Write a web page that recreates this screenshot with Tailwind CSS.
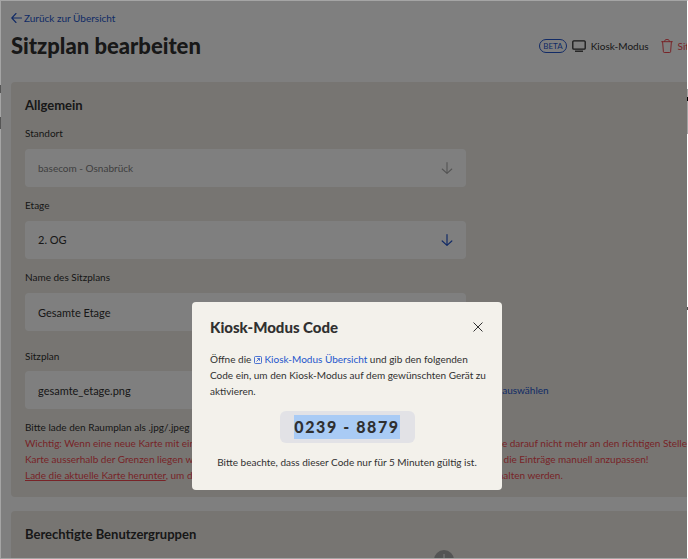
<!DOCTYPE html>
<html lang="de">

<head>
    <meta charset="UTF-8">
    <meta name="viewport" content="width=device-width, initial-scale=1.0">
    <title>Sitzplan bearbeiten</title>
    <script src="https://cdn.jsdelivr.net/npm/@tailwindcss/browser@4"></script>
</head>

<body class="h-screen overflow-hidden bg-white font-[Lato,sans-serif] text-[10px] leading-4 text-[#303030]">
    <div class="h-full overflow-hidden pl-[11px] pt-[10px]">
        <header>
            <a href="#" class="flex w-fit items-center gap-0.5 text-[#2456cc]">
                <svg class="h-3 w-[11px]" viewBox="0 0 11 12" fill="none" stroke="currentColor" stroke-width="1.1" stroke-linecap="round" stroke-linejoin="round">
                    <path d="M10.5 6H.8M5 1.5.8 6 5 10.5" />
                </svg>
                Zurück zur Übersicht
            </a>
            <div class="mt-1 flex items-center justify-between">
                <h1 class="text-[22px] leading-8 font-black whitespace-nowrap">Sitzplan bearbeiten</h1>
                <div class="-mr-6 flex shrink-0 items-center whitespace-nowrap">
                    <span class="mr-[5px] rounded-full border border-[#2456cc] px-[3px] text-[8px] leading-3 text-[#2456cc]">BETA</span>
                    <button class="flex items-center gap-[5px]">
                        <svg class="h-3 w-[14px]" viewBox="0 0 14 12" fill="none" stroke="currentColor" stroke-width="1.3" stroke-linejoin="round">
                            <rect x=".8" y=".8" width="12.4" height="8.4" rx="1" />
                            <path d="M3 11.2h8" />
                        </svg>
                        Kiosk-Modus
                    </button>
                    <button class="ml-3 flex items-center gap-[5px] text-[#f04850]">
                        <svg class="h-[14px] w-3" viewBox="0 0 12 14" fill="none" stroke="currentColor" stroke-linejoin="round" stroke-linecap="round">
                            <path d="M.7 2.7h10.6M1.6 2.7l.8 10.1q.1.7.8.7h5.6q.7 0 .8-.7l.8-10.1M3.6 2.5l.5-1.4Q4.3.6 4.9.6h2.2q.6 0 .8.5l.5 1.4" />
                        </svg>
                        Sitzplan
                    </button>
                </div>
            </div>
        </header>

        <main class="mt-5 flex flex-col gap-[14px]">
            <section class="rounded-l bg-[#eeebe5] px-[14px] pt-[14px] pb-[14px]">
                <h2 class="text-[13px] leading-[18px] font-bold">Allgemein</h2>
                <div class="mt-[11px] grid gap-[10px]">
                    <div>
                        <label for="location" class="block">Standort</label>
                        <div class="relative mt-2 w-[441px]">
                            <select id="location" disabled class="h-[38px] w-full appearance-none rounded bg-white px-[13px] text-[10px] text-[#808080] opacity-100">
                                <option>basecom - Osnabrück</option>
                            </select>
                            <svg class="pointer-events-none absolute top-[13px] right-[13px] h-3 w-3 text-[#a8a8a8]" viewBox="0 0 12 12" fill="none" stroke="currentColor" stroke-width="1.1" stroke-linecap="round" stroke-linejoin="round">
                                <path d="M6 .6v10.8M1.2 7 6 11.4 10.8 7" />
                            </svg>
                        </div>
                    </div>
                    <div>
                        <label for="floor" class="block">Etage</label>
                        <div class="relative mt-2 w-[441px]">
                            <select id="floor" class="h-[38px] w-full appearance-none rounded bg-white px-[13px] text-[11px]">
                                <option>2. OG</option>
                            </select>
                            <svg class="pointer-events-none absolute top-[13px] right-[13px] h-3 w-3 text-[#2456cc]" viewBox="0 0 12 12" fill="none" stroke="currentColor" stroke-width="1.2" stroke-linecap="round" stroke-linejoin="round">
                                <path d="M6 .6v10.8M1.2 7 6 11.4 10.8 7" />
                            </svg>
                        </div>
                    </div>
                    <div>
                        <label for="plan-name" class="block">Name des Sitzplans</label>
                        <input id="plan-name" type="text" value="Gesamte Etage" class="mt-2 block h-[38px] w-[441px] rounded bg-white px-[13px] text-[11px]">
                    </div>
                </div>
                <div class="mt-[17px]">
                    <label for="plan-file" class="block">Sitzplan</label>
                    <div class="mt-[7px] flex items-center">
                        <input id="plan-file" type="text" value="gesamte_etage.png" readonly class="block h-[38px] w-[441px] rounded bg-white px-[13px] text-[11px]">
                        <button class="ml-[10px] whitespace-nowrap text-[#2456cc]">Datei auswählen</button>
                    </div>
                </div>
                <div class="mt-[10px] whitespace-nowrap">
                    <p>Bitte lade den Raumplan als .jpg/.jpeg oder .png hoch.</p>
                    <div class="text-[#f04850]">
                        <p>Wichtig: Wenn eine neue Karte mit einem anderen Seitenverhältnis hochgeladen wird, so liegen diese Einträge darauf nicht mehr an den richtigen Stellen.</p>
                        <p>Karte ausserhalb der Grenzen liegen würden, werden nicht angezeigt. Bitte denke daran und sei so vorsichtig, die Einträge manuell anzupassen!</p>
                        <p><a href="#" class="underline">Lade die aktuelle Karte herunter</a>, um die Größe und das alte Format zu prüfen. So können alle Einträge beibehalten werden.</p>
                    </div>
                </div>
            </section>

            <section class="rounded-l bg-[#eeebe5] px-[14px] pt-[14px] pb-8">
                <h2 class="text-[13px] leading-[18px] font-bold">Berechtigte Benutzergruppen</h2>
                <div class="mt-[7px] ml-[409px] flex">
                    <button aria-label="Gruppe hinzufügen" class="flex h-5 w-5 items-center justify-center rounded-full bg-[#a8a8a8] text-white">
                        <svg class="h-3 w-3" viewBox="0 0 12 12" fill="none" stroke="currentColor">
                            <path d="M6 0v12M0 6h12" />
                        </svg>
                    </button>
                </div>
            </section>
        </main>
    </div>

    <div class="fixed inset-0 border border-r-white border-t-[#a5a5a5] border-b-[#a5a5a5] border-l-[#a5a5a5] bg-black/50 bg-clip-padding"></div>

    <!-- bits of the window behind, left and right edge -->
    <div class="fixed top-[85px] left-0 h-2 w-px bg-[#555]"></div>
    <div class="fixed top-[117px] left-0 h-3 w-px bg-[#555]"></div>
    <div class="fixed top-[89px] right-0 h-[45px] w-px bg-[#a5a5a5]"></div>
    <div class="fixed top-[97px] right-0 h-1 w-px bg-black"></div>
    <div class="fixed top-[307px] right-0 h-[3px] w-px bg-[#555]"></div>

    <dialog open aria-labelledby="kiosk-title" class="fixed top-[302px] left-[192px] m-0 block w-[310px] rounded bg-[#f3f1eb] px-[18px] pt-[14px] pb-5 text-[#303030]">
        <div class="flex items-center justify-between">
            <h2 id="kiosk-title" class="text-[15px] leading-[22px] font-black">Kiosk-Modus Code</h2>
            <button aria-label="Schließen">
                <svg class="h-3 w-3" viewBox="0 0 12 12" fill="none" stroke="currentColor" stroke-linecap="round">
                    <path d="m1.8 1.8 8.4 8.4M10.2 1.8l-8.4 8.4" />
                </svg>
            </button>
        </div>
        <p class="mt-[13px] whitespace-nowrap">
            Öffne die
            <a href="#" class="text-[#2456cc]"><svg class="inline h-2 w-2 align-[-1px]" viewBox="0 0 8 8" fill="none" stroke="currentColor" stroke-width=".8">
                    <rect x=".5" y=".5" width="7" height="7" rx="1" />
                    <path d="m2.5 5.5 3-3M3.2 2.5h2.3v2.3" />
                </svg> Kiosk-Modus Übersicht</a>
            und gib den folgenden<br>
            Code ein, um den Kiosk-Modus auf dem gewünschten Gerät zu<br>
            aktivieren.
        </p>
        <div class="mx-auto mt-[12px] flex h-8 w-[135px] items-center justify-center rounded-md bg-[#e2e2e6]">
            <span class="bg-[#a9cbf5] text-[16px] leading-6 font-black tracking-widest whitespace-nowrap">0239 - 8879</span>
        </div>
        <p class="mt-[11px] text-center whitespace-nowrap">Bitte beachte, dass dieser Code nur für 5 Minuten gültig ist.</p>
    </dialog>
</body>

</html>
